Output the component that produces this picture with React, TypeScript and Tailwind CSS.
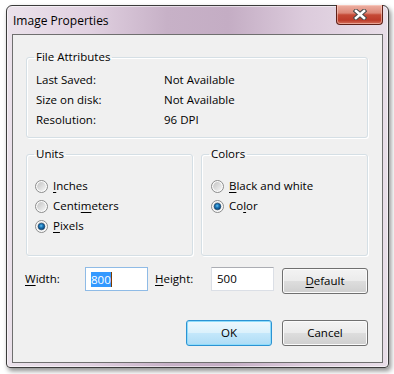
import React from "react";

function Radio({ checked }: { checked?: boolean }) {
  return (
    <svg width="13" height="13" viewBox="0 0 13 13" className="shrink-0">
      <defs>
        <linearGradient id="rinner" x1="0" y1="0" x2="1" y2="1">
          <stop offset="0" stopColor="#c4c4c4" />
          <stop offset="1" stopColor="#f5f5f5" />
        </linearGradient>
        <radialGradient id="rdot" cx="0.45" cy="0.4" r="0.6">
          <stop offset="0" stopColor="#6cc6f0" />
          <stop offset="0.4" stopColor="#1f7dc0" />
          <stop offset="1" stopColor="#083f70" />
        </radialGradient>
      </defs>
      <circle cx="6.5" cy="6.5" r="6" fill="#fbfbfb" stroke="#8a8b8b" strokeWidth="1" />
      <circle cx="6.5" cy="6.5" r="4.4" fill="url(#rinner)" />
      {checked && <circle cx="6.5" cy="6.5" r="3.3" fill="url(#rdot)" stroke="#143f66" strokeWidth="0.6" />}
    </svg>
  );
}

function RadioRow({ checked, children }: { checked?: boolean; children: React.ReactNode }) {
  return (
    <div className="flex h-[20px] items-center gap-[5px]">
      <Radio checked={checked} />
      <span>{children}</span>
    </div>
  );
}

function Button({ primary, children }: { primary?: boolean; children: React.ReactNode }) {
  return (
    <button
      className={
        primary
          ? "flex h-[26px] w-[86px] items-center justify-center rounded-[3px] border border-[#2c93d3] bg-[linear-gradient(180deg,#eef8fd_0%,#dbf1fc_48%,#c3e7fb_52%,#aedcf5_100%)] shadow-[inset_0_0_0_1px_#8fdcfb]"
          : "flex h-[26px] w-[86px] items-center justify-center rounded-[3px] border border-[#707070] bg-[linear-gradient(180deg,#f3f3f3_0%,#ebebeb_48%,#dddddd_52%,#cfcfcf_100%)] shadow-[inset_0_0_0_1px_#fbfbfb]"
      }
    >
      {children}
    </button>
  );
}

const groupBox =
  "rounded-[3px] border border-[#d5dfe5] shadow-[inset_1px_1px_0_#ffffff,1px_1px_0_#ffffff]";

export default function App() {
  return (
    <div className="h-[374px] w-[394px] overflow-hidden bg-white pl-[6px] pt-[5px] font-['Open_Sans',sans-serif] text-[11.5px] leading-[16px] text-black">
      {/* window frame */}
      <div className="h-[363px] w-[383px] rounded-t-[6px] rounded-b-[4px] border border-[#3b3b3b] bg-[linear-gradient(90deg,#ebe2eb_0%,#e0d0e0_22%,#c7b1c7_42%,#c4adc4_58%,#dccbdc_78%,#e8dee8_100%)] px-[5px] shadow-[2px_3px_5px_rgba(0,0,0,0.45),inset_0_0_0_1px_rgba(255,255,255,0.55)]">
        {/* title bar */}
        <div className="flex h-[28px] items-start justify-between">
          <span className="ml-[1px] pt-[7px] text-[12px]">Image Properties</span>
          <div className="-mt-px flex h-[20px] w-[47px] items-center justify-center rounded-b-[4px] border border-t-0 border-[#5e2018] bg-[linear-gradient(180deg,#eeb1a4_0%,#dc8878_42%,#c54a36_52%,#bd3b29_80%,#d5725f_100%)] shadow-[inset_0_0_0_1px_rgba(255,220,210,0.5)]">
            <svg width="14" height="11" viewBox="0 0 14 11">
              <path d="M3 2 L11 9 M11 2 L3 9" stroke="#4a4a4a" strokeWidth="4.6" strokeLinecap="square" />
              <path d="M3 2 L11 9 M11 2 L3 9" stroke="#ffffff" strokeWidth="2.6" strokeLinecap="square" />
            </svg>
          </div>
        </div>

        {/* client area */}
        <div className="h-[329px] w-[371px] border border-[#6f6f6f] bg-[#f0f0f0] pl-[13px] pr-[14px] pt-[14px]">
          <fieldset className={groupBox + " pb-[7px] pl-[9px]"}>
            <legend className="ml-[-2px] px-[2px]">File Attributes</legend>
            <div className="grid grid-cols-[128px_1fr] pt-[5px]">
              <div className="h-[20px] leading-[20px]">Last Saved:</div>
              <div className="h-[20px] leading-[20px]">Not Available</div>
              <div className="h-[20px] leading-[20px]">Size on disk:</div>
              <div className="h-[20px] leading-[20px]">Not Available</div>
              <div className="h-[20px] leading-[20px]">Resolution:</div>
              <div className="h-[20px] leading-[20px]">96 DPI</div>
            </div>
          </fieldset>

          <div className="mt-[8px] grid grid-cols-2 gap-[8px]">
            <fieldset className={groupBox + " pb-[19px] pl-[8px]"}>
              <legend className="ml-[-1px] px-[2px]">Units</legend>
              <div className="pt-[14px]">
                <RadioRow>
                  <u className="underline-offset-2">I</u>nches
                </RadioRow>
                <RadioRow>
                  Centi<u className="underline-offset-2">m</u>eters
                </RadioRow>
                <RadioRow checked>
                  <u className="underline-offset-2">P</u>ixels
                </RadioRow>
              </div>
            </fieldset>
            <fieldset className={groupBox + " pb-[19px] pl-[9px]"}>
              <legend className="ml-[-2px] px-[2px]">Colors</legend>
              <div className="pt-[14px]">
                <RadioRow>
                  <u className="underline-offset-2">B</u>lack and white
                </RadioRow>
                <RadioRow checked>
                  Co<u className="underline-offset-2">l</u>or
                </RadioRow>
              </div>
            </fieldset>
          </div>

          {/* size row */}
          <div className="-ml-px mt-[11px] flex items-start">
            <span className="flex h-[24px] w-[60px] items-center">
              <u className="underline-offset-2">W</u>idth:
            </span>
            <div className="flex h-[24px] w-[63px] items-center border border-[#8fbbe6] bg-white pl-[5px]">
              <span className="bg-[#3399ff] leading-[15px] text-white">800</span>
              <span className="h-[15px] w-px bg-[#7a3b00]" />
            </div>
            <span className="ml-[7px] flex h-[24px] w-[56px] items-center">
              <u className="underline-offset-2">H</u>eight:
            </span>
            <div className="flex h-[24px] w-[63px] items-center border border-[#dbdfe6] border-t-[#abadb3] bg-white pl-[5px]">
              500
            </div>
            <div className="ml-[8px] mt-px">
              <Button>
                <u className="underline-offset-2">D</u>efault
              </Button>
            </div>
          </div>

          <div className="mt-[26px] flex justify-end gap-[10px]">
            <Button primary>OK</Button>
            <Button>Cancel</Button>
          </div>
        </div>
      </div>
    </div>
  );
}
